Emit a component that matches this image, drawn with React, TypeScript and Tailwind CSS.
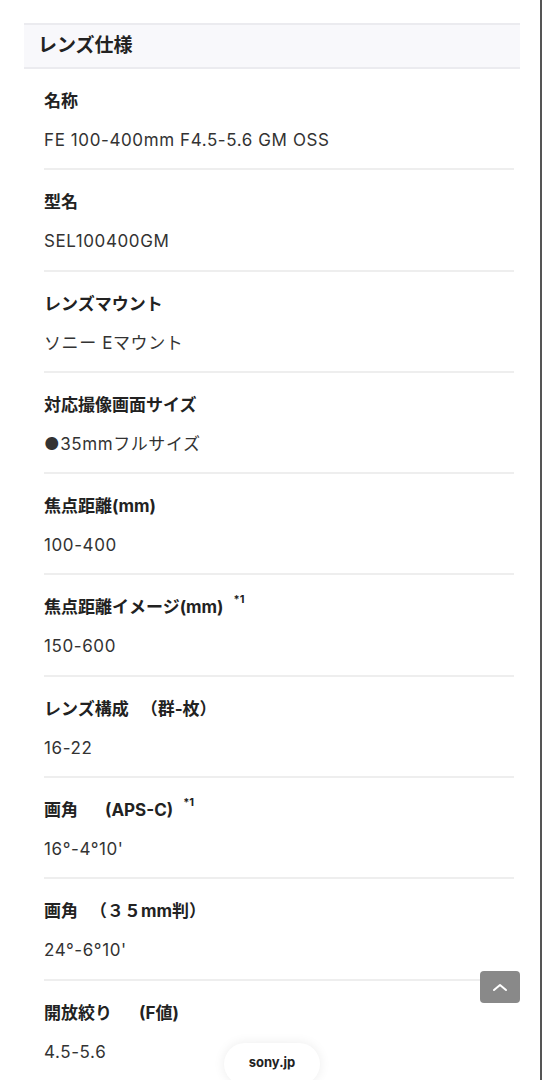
import React from 'react'

interface Spec {
  label: string
  sub?: string
  note?: string
  value: string
}

const specs: Spec[] = [
  { label: '名称', value: 'FE 100-400mm F4.5-5.6 GM OSS' },
  { label: '型名', value: 'SEL100400GM' },
  { label: 'レンズマウント', value: 'ソニー Eマウント' },
  { label: '対応撮像画面サイズ', value: '●35mmフルサイズ' },
  { label: '焦点距離(mm)', value: '100-400' },
  { label: '焦点距離イメージ(mm)', note: '*1', value: '150-600' },
  { label: 'レンズ構成', sub: '（群-枚）', value: '16-22' },
  { label: '画角', sub: '(APS-C)', note: '*1', value: "16°-4°10'" },
  { label: '画角', sub: '（３５mm判）', value: "24°-6°10'" },
  { label: '開放絞り', sub: '(F値)', value: '4.5-5.6' },
]

const font = { fontFamily: 'Inter, "Noto Sans CJK JP", sans-serif' }

const SpecRow: React.FC<{ spec: Spec }> = ({ spec }) => (
  <div className="flex h-[101.3px] flex-col border-b-2 border-[#eeeeee] pt-5">
    <div className="flex h-6 items-center text-[17px] font-bold leading-6 text-[#222]">
      <span>{spec.label}</span>
      {spec.sub && (
        <span className={spec.sub.startsWith('（') ? 'ml-[12px]' : 'ml-[27px]'}>{spec.sub}</span>
      )}
      {spec.note && (
        <span className="relative -top-2 ml-2.5 text-[11px] font-bold leading-none">{spec.note}</span>
      )}
    </div>
    <div className="mt-[15px] h-6 text-[17px] leading-6 tracking-[0.6px] text-[#333]">{spec.value}</div>
  </div>
)

export default function App() {
  return (
    <div className="relative h-[1080px] w-[542px] overflow-hidden border-r-2 border-[#555] bg-white" style={font}>
      <div className="pt-[23px] pl-6 pr-[20px]">
        {/* section header */}
        <div className="flex h-[46px] items-center border-y-2 border-[#ebebef] bg-[#f8f8fb] pl-[14px]">
          <h2 className="text-[19px] font-bold text-[#222]">レンズ仕様</h2>
        </div>

        {/* spec rows */}
        <div className="pl-5 pr-1.5">
          {specs.map((s, i) => (
            <SpecRow key={i} spec={s} />
          ))}
        </div>
      </div>

      {/* back to top */}
      <button className="absolute left-[480px] top-[971px] flex h-8 w-10 items-center justify-center rounded bg-[#898989]">
        <svg width="16" height="10" viewBox="0 0 16 10" fill="none" stroke="white" strokeWidth="2" strokeLinecap="round" strokeLinejoin="round">
          <path d="M2 8l6-5 6 5" />
        </svg>
      </button>

      {/* sony.jp pill */}
      <div className="absolute left-[224px] top-[1043px] flex h-[42px] w-[96px] items-start justify-center rounded-full bg-white pt-[10px] shadow-[0_0_12px_rgba(0,0,0,0.08)]">
        <span className="text-[13px] font-bold text-[#222]">sony.jp</span>
      </div>
    </div>
  )
}
